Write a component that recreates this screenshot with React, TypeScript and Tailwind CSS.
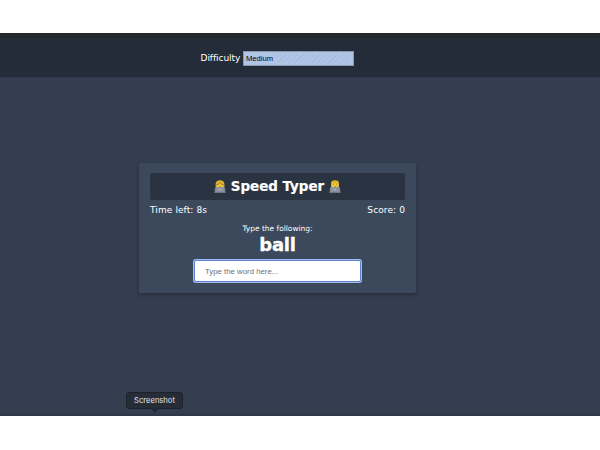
import React from "react";

function Coder({ long }: { long?: boolean }) {
  return (
    <svg className="h-[13px] w-[12px] shrink-0" viewBox="0 0 12 13">
      {long ? (
        <path d="M2 9V3.6Q2 .3 6 .3T10 3.6V9z" fill="#dfb72c" />
      ) : (
        <path d="M1.6 6V4Q2 .3 6 .3T10.4 4v3H1.6z" fill="#dfb32c" />
      )}
      <path d="M3.3 4.2Q6 2.8 8.8 4.2V6Q8.5 8 6 8T3.3 6z" fill="#f5cf45" />
      <path d="M4.4 4.2v1.2M7.5 4.2v1.2M5.2 6.3h1.8" stroke="#94712a" strokeWidth=".7" />
      {!long && <path d="M2.2 4.8Q5 4.7 6.2 2.5Q7.5 4.7 10 4.9" fill="none" stroke="#a37820" strokeWidth=".9" />}
      <path d="M.8 12V9.2Q1 7.4 3 7.2h6q2 .2 2.2 2V12z" fill="#727b87" />
      <rect x="1.5" y="7" width="9" height="4.9" rx=".5" fill="#8e95a0" />
      <rect x=".4" y="11.5" width="11.2" height="1.3" rx=".4" fill="#858d98" />
      <circle cx="6" cy="9.6" r=".7" fill="#d0d4db" />
    </svg>
  );
}

export default function App() {
  return (
    <div className="h-[450px] w-[600px] overflow-hidden bg-white pt-[33px] font-['DejaVu_Sans',sans-serif] text-white">
      <div className="relative flex h-[383px] flex-col items-center bg-[#333e50]">
        <div className="h-[5px] w-full shrink-0 bg-[#24292c]" />
        <header className="flex h-[39px] w-full shrink-0 items-center bg-[#242c39] pl-[200.5px]">
          <label className="w-[42.5px] whitespace-nowrap text-[9px] leading-[12px] tracking-[-0.05px]">Difficulty</label>
          <div className="mt-px flex h-[15px] w-[111px] items-center border border-[#8c98aa] bg-[#b0c5e6] pl-[2px] font-['Liberation_Sans',sans-serif] text-[7.6px] text-black">
            <span className="leading-[11px]">Medium</span>
            <span className="ml-[3px] mr-[4px] h-[9px] flex-1 bg-[repeating-linear-gradient(135deg,transparent_0px,transparent_3px,#a5bbdf_3px,#a5bbdf_4px)]" />
          </div>
        </header>
        <div className="h-px w-full shrink-0 bg-[#303a4b]" />

        <main className="mr-[45px] mt-[85px] flex h-[130px] w-[277px] shrink-0 flex-col items-center rounded-[2px] bg-[#3c495d] px-[11px] pt-[10px] shadow-[0_2px_4px_rgba(0,0,0,0.25)]">
          <h1 className="flex h-[27px] w-full items-center justify-center gap-[5px] rounded-[2px] bg-[#2a3341] text-[13.4px] font-bold">
            <Coder />
            <span className="whitespace-nowrap leading-[21px] tracking-[0.02px] [-webkit-text-stroke:0.2px_white]">Speed Typer</span>
            <Coder long />
          </h1>
          <div className="mt-[4px] flex h-[13px] w-full justify-between text-[9px] leading-[13px] tracking-[0.1px]">
            <span>Time left: 8s</span>
            <span>Score: 0</span>
          </div>
          <p className="mt-[7px] text-[7.5px] leading-[10px] tracking-[-0.02px]">Type the following:</p>
          <h2 className="text-[18px] font-bold leading-[21px] tracking-[-0.25px] [-webkit-text-stroke:0.3px_white]">ball</h2>
          <input
            className="mt-[5px] h-[22px] w-[167px] shrink-0 rounded-[2px] border border-[#5c84d7] bg-white pl-[10px] font-['Liberation_Sans',sans-serif] text-[7.8px] text-black shadow-[0_0_0_1px_#a3baea] outline-none placeholder:text-[#6b727b]"
            placeholder="Type the word here..."
          />
        </main>

        <div className="absolute bottom-0 left-0 h-[4px] w-full bg-gradient-to-b from-[#333e50] to-[#2c3543]" />
        <div className="absolute left-[126px] top-[359px] flex h-[17px] w-[57px] items-center justify-center rounded-[3px] border border-[#1c222b] bg-[#272d37] pt-px font-['Inter',sans-serif] text-[7.6px] text-[#e0e4ea]">
          Screenshot
          <svg className="absolute left-[23px] top-[15px] h-[5px] w-[10px]" viewBox="0 0 10 5">
            <path d="M0 0h10L5 4.5z" fill="#222831" />
          </svg>
        </div>
      </div>
    </div>
  );
}
